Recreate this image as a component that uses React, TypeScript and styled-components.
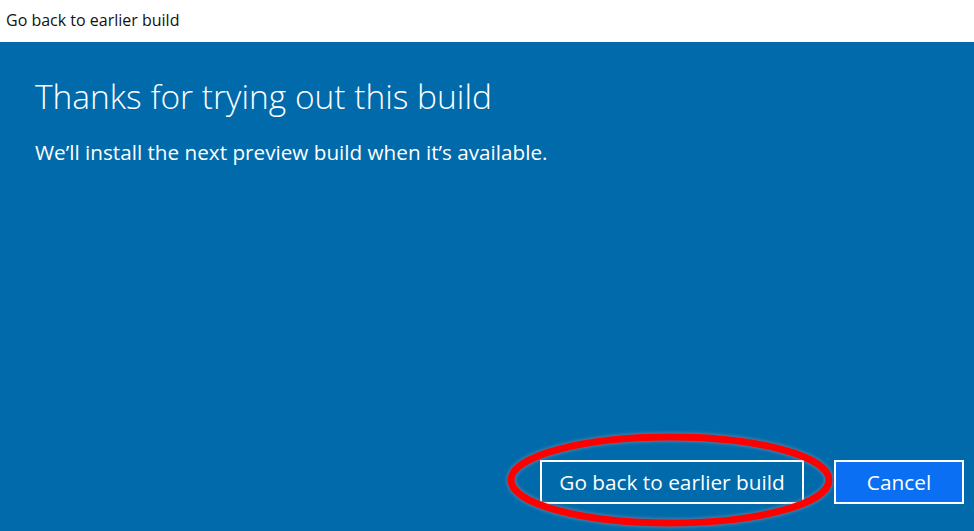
import styled, { createGlobalStyle } from "styled-components"

const GlobalStyle = createGlobalStyle`
    html, body {
        margin: 0;
        padding: 0;
        background: #ffffff;
    }
    body {
        font-family: "Open Sans", "Noto Sans", sans-serif;
    }
`

export default function App() {
    return (
        <>
            <GlobalStyle />
            <Window>
                <TitleBar>Go back to earlier build</TitleBar>
                <Body>
                    <Heading>Thanks for trying out this build</Heading>
                    <Message>We’ll install the next preview build when it’s available.</Message>
                    <Footer>
                        <Marked>
                            <Button>Go back to earlier build</Button>
                            <Circle width="326" height="94" viewBox="0 0 326 94">
                                <ellipse cx="163" cy="47" rx="159" ry="43" fill="none" stroke="#ff0000" strokeWidth="7" />
                            </Circle>
                        </Marked>
                        <Button $primary>Cancel</Button>
                    </Footer>
                </Body>
            </Window>
        </>
    )
}

const Window = styled.div`
    display: flex;
    flex-direction: column;
    width: 974px;
    height: 531px;
    overflow: hidden;
`
const TitleBar = styled.div`
    height: 42px;
    flex-shrink: 0;
    display: flex;
    align-items: center;
    padding-left: 6px;
    padding-bottom: 2px;
    box-sizing: border-box;
    background: #ffffff;
    color: #111111;
    font-size: 16px;
`
const Body = styled.div`
    flex: 1;
    display: flex;
    flex-direction: column;
    background: #006aab;
    color: #ffffff;
    padding: 30px 10px 27px 35px;
`
const Heading = styled.h1`
    margin: 0;
    font-size: 33.5px;
    font-weight: 300;
    line-height: 48px;
`
const Message = styled.p`
    margin: 18px 0 0;
    font-size: 20.7px;
    line-height: 28px;
`
const Footer = styled.div`
    margin-top: auto;
    display: flex;
    justify-content: flex-end;
    gap: 30px;
`
const Marked = styled.div`
    position: relative;
    display: flex;
`
const Circle = styled.svg`
    position: absolute;
    left: -33px;
    top: -27px;
    overflow: visible;
    filter: drop-shadow(0 0 2px rgba(150, 150, 160, 0.8));
`
const Button = styled.button<{ $primary?: boolean }>`
    height: 44px;
    padding: 0;
    width: ${p => (p.$primary ? "130px" : "264px")};
    border: 2px solid #ffffff;
    background: ${p => (p.$primary ? "#0a6ff2" : "transparent")};
    color: #ffffff;
    font-family: "Open Sans", "Noto Sans", sans-serif;
    font-size: 20.8px;
    cursor: pointer;
`
